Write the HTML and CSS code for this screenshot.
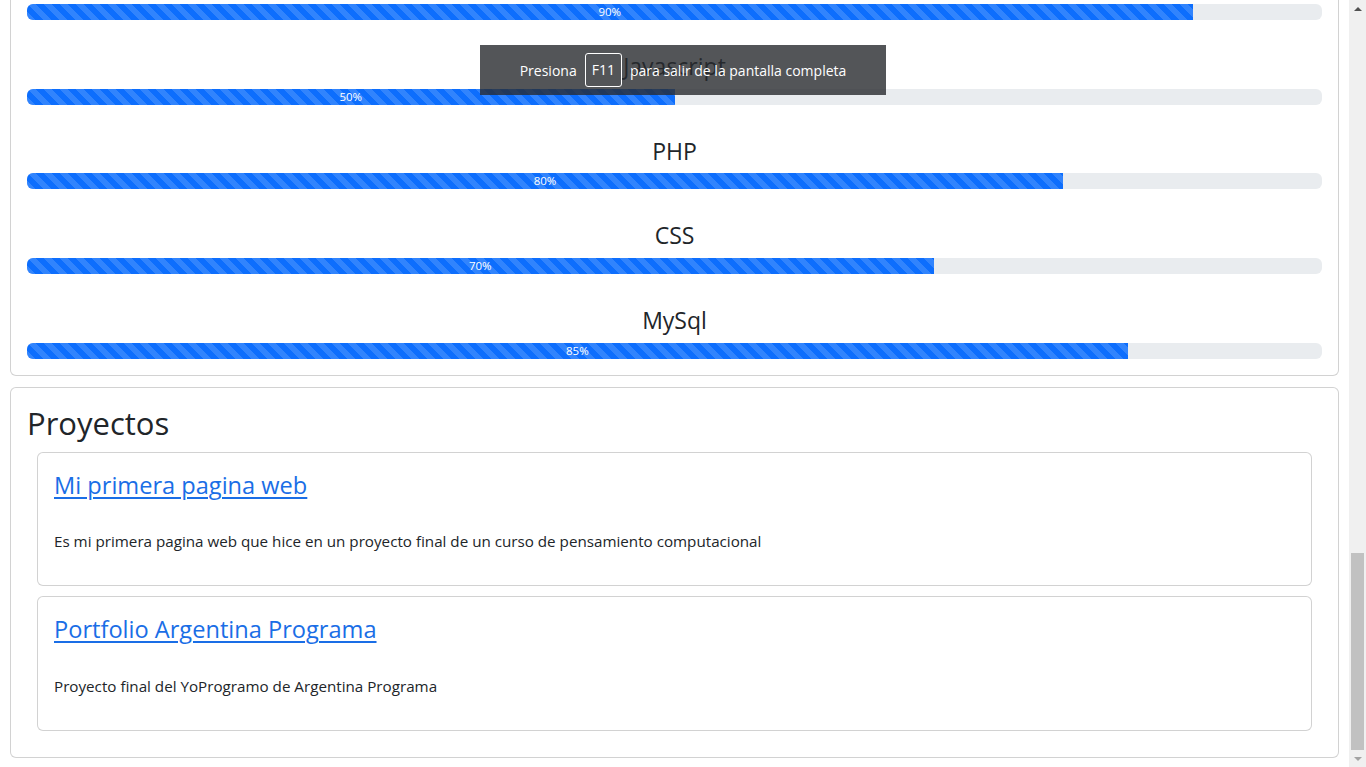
FILE: index.html
```html
<!DOCTYPE html>
<html lang="es">
<head>
<meta charset="utf-8">
<title>Portfolio</title>
<link rel="stylesheet" href="styles.css">
</head>
<body>
<div class="screen">
  <main class="page">
    <section class="card skills">
      <div class="skill first">
        <h4 class="skill-title">HTML</h4>
        <div class="progress"><div class="bar" style="width:90%">90%</div></div>
      </div>
      <div class="skill">
        <h4 class="skill-title">Javascript</h4>
        <div class="progress"><div class="bar" style="width:50%">50%</div></div>
      </div>
      <div class="skill">
        <h4 class="skill-title">PHP</h4>
        <div class="progress"><div class="bar" style="width:80%">80%</div></div>
      </div>
      <div class="skill">
        <h4 class="skill-title">CSS</h4>
        <div class="progress"><div class="bar" style="width:70%">70%</div></div>
      </div>
      <div class="skill">
        <h4 class="skill-title">MySql</h4>
        <div class="progress"><div class="bar" style="width:85%">85%</div></div>
      </div>
    </section>
    <section class="card projects">
      <h2 class="section-title">Proyectos</h2>
      <div class="card project">
        <h3 class="project-title"><a href="#">Mi primera pagina web</a></h3>
        <p class="project-text">Es mi primera pagina web que hice en un proyecto final de un curso de pensamiento computacional</p>
      </div>
      <div class="card project">
        <h3 class="project-title"><a href="#">Portfolio Argentina Programa</a></h3>
        <p class="project-text">Proyecto final del YoProgramo de Argentina Programa</p>
      </div>
    </section>
  </main>
  <div class="scrollbar">
    <div class="sb-arrow up"></div>
    <div class="sb-track"><div class="sb-thumb"></div></div>
    <div class="sb-arrow down"></div>
  </div>
  <div class="toast">
    <span>Presiona</span><span class="key">F11</span><span>para salir de la pantalla completa</span>
  </div>
</div>
</body>
</html>
```
FILE: styles.css
```css
* { box-sizing: border-box; }
html, body { margin: 0; padding: 0; }
body {
  font-family: "Open Sans", "Noto Sans", sans-serif;
  font-size: 16px;
  line-height: 1.5;
  color: #212529;
  background: #fff;
  overflow: hidden;
}
.screen {
  position: relative;
  display: flex;
  height: 767px;
  overflow: hidden;
}
.page {
  flex: 1;
  padding: 0 10px;
  margin-top: -50px;
}
.card {
  border: 1px solid rgba(0,0,0,0.175);
  border-radius: 6px;
  background: #fff;
}
.skills {
  padding: 16px;
  margin-bottom: 11px;
}
.skill { padding-top: 32px; }
.skill.first { padding-top: 0; }
.skill-title {
  margin: 0 0 8px;
  font-size: 23px;
  font-weight: 400;
  line-height: 28.8px;
  text-align: center;
  color: #212529;
}
.progress {
  height: 16px;
  background: #e9ecef;
  border-radius: 6px;
  overflow: hidden;
  display: flex;
}
.bar {
  background-color: #0d6efd;
  background-image: linear-gradient(45deg, rgba(255,255,255,.15) 25%, transparent 25%, transparent 50%, rgba(255,255,255,.15) 50%, rgba(255,255,255,.15) 75%, transparent 75%, transparent);
  background-size: 16px 16px;
  color: #fff;
  font-size: 11.5px;
  line-height: 16px;
  text-align: center;
  white-space: nowrap;
}
.projects {
  padding: 16px;
}
.section-title {
  margin: 0 0 8px;
  font-size: 31px;
  font-weight: 500;
  line-height: 38.4px;
}
.project {
  margin: 10px;
  padding: 16px;
}
.project-title {
  margin: 0 0 26.5px;
  font-size: 23.6px;
  font-weight: 400;
  line-height: 33.6px;
}
.project-title a {
  color: #1a6ee6;
  text-decoration: underline;
  text-underline-offset: 3px;
  text-decoration-thickness: 1.5px;
}
.project-text {
  margin: 0 0 16px;
  font-size: 15.2px;
  line-height: 24px;
}
.scrollbar {
  width: 17px;
  flex: 0 0 17px;
  background: #f0f0f0;
  display: flex;
  flex-direction: column;
}
.sb-arrow {
  height: 17px;
  display: flex;
  align-items: center;
  justify-content: center;
}
.sb-arrow.up::before {
  content: "";
  border-left: 4px solid transparent;
  border-right: 4px solid transparent;
  border-bottom: 4px solid #505050;
}
.sb-arrow.down::before {
  content: "";
  border-left: 4px solid transparent;
  border-right: 4px solid transparent;
  border-top: 4px solid #a3a3a3;
}
.sb-track {
  flex: 1;
  display: flex;
  flex-direction: column;
  justify-content: flex-end;
  padding: 0 2px;
}
.sb-thumb {
  height: 197px;
  background: #c1c1c1;
}
.toast {
  position: absolute;
  left: 480px;
  top: 45px;
  width: 406px;
  height: 50px;
  background: rgba(40,42,46,0.8);
  color: #fff;
  display: flex;
  align-items: center;
  justify-content: center;
  gap: 8px;
  font-size: 14px;
}
.key {
  border: 1px solid #fff;
  border-radius: 3px;
  padding: 0 6px;
  height: 34px;
  line-height: 32px;
}
```
